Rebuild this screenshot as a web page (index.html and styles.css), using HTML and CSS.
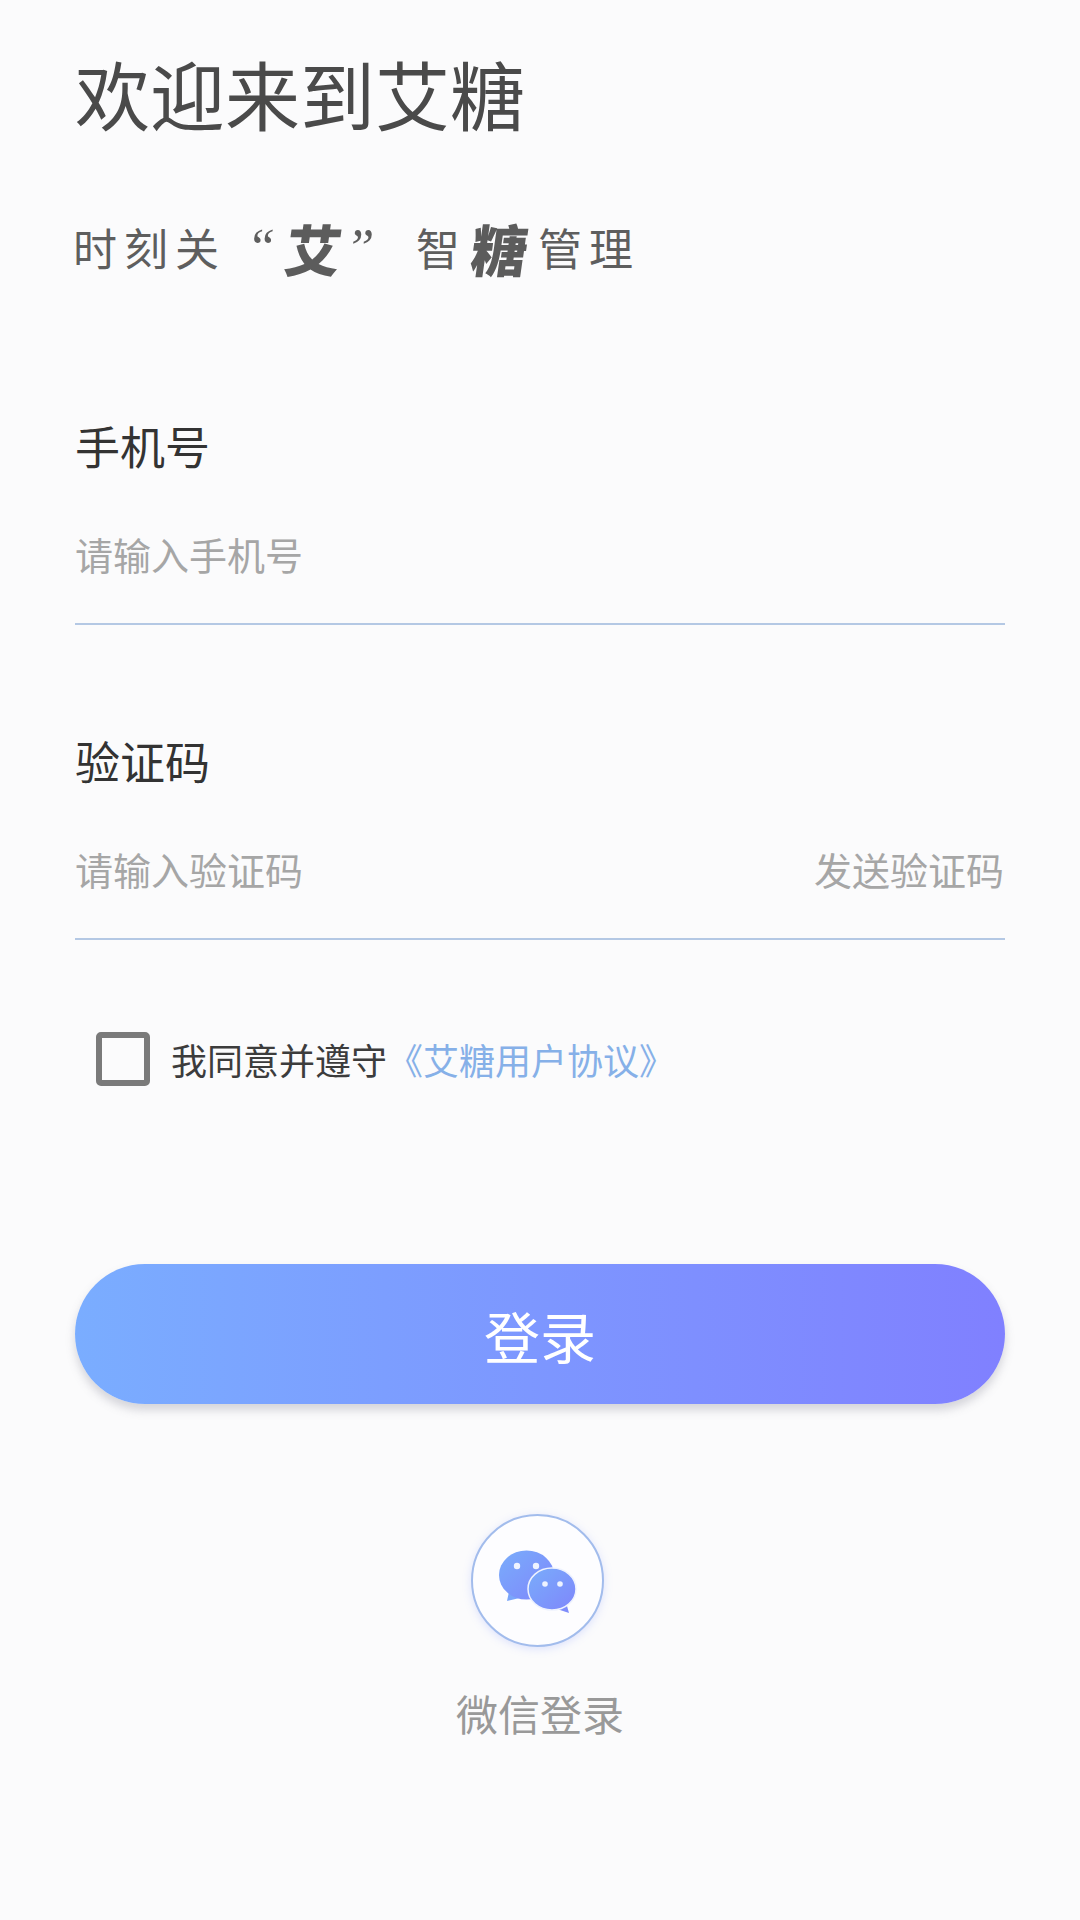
FILE: index.html
```html
<!DOCTYPE html>
<html lang="zh-CN">
<head>
  <meta charset="UTF-8" />
  <title>欢迎来到艾糖</title>
  <link rel="stylesheet" href="styles.css">
</head>
<body>
  <div class="page">
    <h1 class="title">欢迎来到艾糖</h1>
    <p class="slogan">时刻关<span class="quote open">“</span><span class="brush">艾</span><span class="quote close">”</span><span class="zhi">智</span><span class="brush tang">糖</span><span class="guan">管理</span></p>

    <div class="field first">
      <div class="label">手机号</div>
      <div class="input-row">
        <span class="placeholder">请输入手机号</span>
      </div>
    </div>

    <div class="field">
      <div class="label">验证码</div>
      <div class="input-row">
        <span class="placeholder">请输入验证码</span>
        <span class="placeholder">发送验证码</span>
      </div>
    </div>

    <div class="agree">
      <div class="checkbox"></div>
      <span>我同意并遵守</span>
      <a class="link">《艾糖用户协议》</a>
    </div>

    <button class="login">登录</button>

    <div class="wechat">
      <div class="wechat-circle">
        <svg width="129" height="129" viewBox="1 1 129 129">
          <defs>
            <linearGradient id="chat" x1="0" y1="0" x2="1" y2="1">
              <stop offset="0" stop-color="#79adfb"/>
              <stop offset="1" stop-color="#7f86fb"/>
            </linearGradient>
          </defs>
          <path d="M35 86 L38 72 L52 82 Z" fill="#7aa6fb"/>
          <ellipse cx="54.500" cy="60" rx="27.500" ry="24.500" fill="url(#chat)"/>
          <path d="M97 98 L93 84 L82 93 Z" fill="#7f8dfb"/>
          <ellipse cx="80" cy="74" rx="24" ry="21" fill="url(#chat)" stroke="#eef2fe" stroke-width="1.500"/>
          <circle cx="45" cy="51" r="3.200" fill="#eef3ff"/>
          <circle cx="64" cy="51" r="3.200" fill="#eef3ff"/>
          <circle cx="73" cy="69" r="2.800" fill="#eef3ff"/>
          <circle cx="88" cy="69" r="2.800" fill="#eef3ff"/>
        </svg>
      </div>
      <div class="wechat-text">微信登录</div>
    </div>
  </div>
</body>
</html>
```

FILE: styles.css
```css
* {
  margin: 0;
  padding: 0;
  box-sizing: border-box;
}

html, body {
  height: 100%;
  overflow: hidden;
  background: #fbfbfc;
  font-family: "Noto Sans CJK SC", "Noto Sans", sans-serif;
}

.page {
  padding: 48px 75px 0;
}

.title {
  font-size: 75px;
  line-height: 90px;
  font-weight: 400;
  color: #4a4a4a;
}

.slogan {
  margin-top: 79px;
  margin-left: -2px;
  display: flex;
  align-items: center;
  height: 60px;
  font-size: 44px;
  letter-spacing: 7px;
  color: #5e5e5e;
}

.quote {
  text-align: center;
  letter-spacing: 0;
  font-family: "Liberation Serif", serif;
  font-style: italic;
  font-size: 52px;
}

.quote.open {
  width: 50px;
  margin-left: 10px;
}

.quote.close {
  width: 36px;
}

.brush {
  font-size: 56px;
  font-weight: 900;
  letter-spacing: 0;
  color: #5c5c5c;
  transform: skewX(-8deg);
}

.zhi {
  margin-left: 38px;
}

.tang {
  margin-left: 5px;
}

.guan {
  margin-left: 10px;
}

.field {
  margin-top: 106px;
}

.field.first {
  margin-top: 139px;
}

.label {
  font-size: 45px;
  line-height: 60px;
  color: #333;
}

.input-row {
  display: flex;
  justify-content: space-between;
  padding: 48px 1px 39px 0;
  border-bottom: 2px solid #b4c8e4;
}

.placeholder {
  font-size: 38px;
  line-height: 60px;
  color: #a6a6a6;
}

.agree {
  display: flex;
  align-items: center;
  margin-top: 92px;
  margin-left: 21px;
  font-size: 36px;
  line-height: 54px;
  color: #3c3c3c;
}

.checkbox {
  width: 54px;
  height: 54px;
  margin-right: 21px;
  border: 6px solid #7a7a7a;
  border-radius: 5px;
}

.link {
  color: #86b0e8;
}

.login {
  display: block;
  width: 100%;
  height: 140px;
  margin-top: 178px;
  border: none;
  border-radius: 70px;
  background: linear-gradient(90deg, #7aadff, #8080ff);
  box-shadow: 0 6px 10px rgba(110, 110, 130, 0.28);
  color: #fff;
  font-family: inherit;
  font-size: 56px;
}

.wechat {
  display: flex;
  flex-direction: column;
  align-items: center;
  margin-top: 110px;
}

.wechat-circle {
  width: 133px;
  height: 133px;
  margin-left: -6px;
  display: flex;
  align-items: center;
  justify-content: center;
  border: 2px solid #a2bcec;
  border-radius: 50%;
  background: #fdfdff;
  box-shadow: 0 2px 8px rgba(130, 150, 255, 0.25);
}

.wechat-text {
  margin-top: 36px;
  font-size: 42px;
  line-height: 60px;
  color: #999;
}
```
